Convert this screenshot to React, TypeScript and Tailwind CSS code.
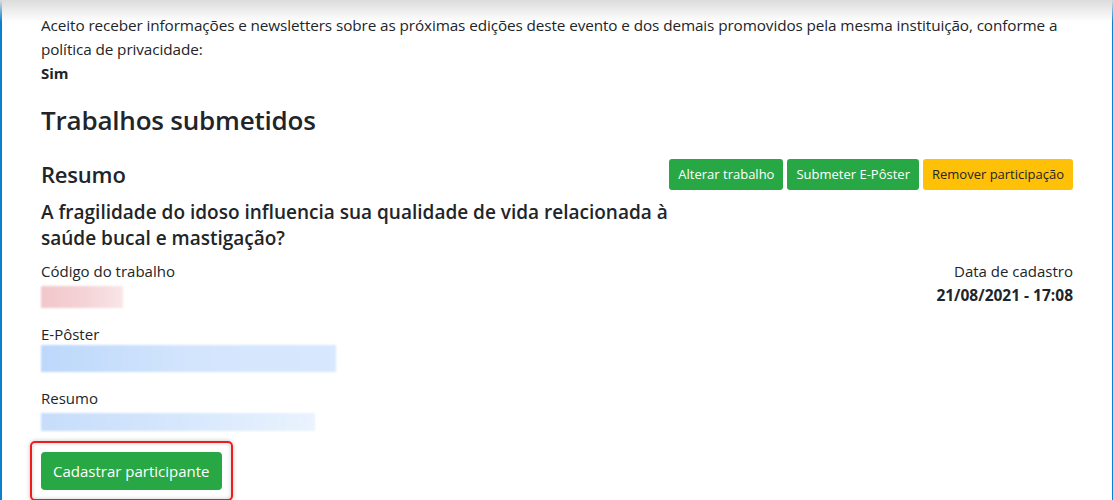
export default function App() {
  const font = { fontFamily: '"Open Sans", "Noto Sans", sans-serif' };
  return (
    <div className="relative h-[500px] w-[1113px] overflow-hidden bg-white text-[#212529]" style={font}>
      {/* moldura azul */}
      <div className="absolute left-0 top-0 h-full w-[2px] bg-[#0a7fd1]" />
      <div className="absolute right-0 top-0 h-full w-[1px] bg-[#0a7fd1]" />
      <div className="pointer-events-none absolute left-0 top-0 h-[22px] w-full bg-gradient-to-b from-[#dcdcdc] to-white/0" />

      <div className="pl-[41px] pr-[40px] pt-[13px]">
        <p className="text-[15.3px] leading-[24px] tracking-[-0.1px]">
          Aceito receber informações e newsletters sobre as próximas edições deste evento e dos demais promovidos pela mesma instituição, conforme a política de privacidade:
        </p>
        <p className="text-[15px] font-bold leading-[24px]">Sim</p>

        <h3 className="mt-[20px] text-[26px] font-semibold leading-[30px] tracking-[-0.2px]">Trabalhos submetidos</h3>

        <div className="mt-[24px] flex items-start justify-between">
          <h4 className="pt-[1px] text-[22px] font-semibold leading-[28px] tracking-[-0.2px]">Resumo</h4>
          <div className="flex gap-[4px]">
            <button className="h-[31px] rounded-[3px] bg-[#28a745] px-[9px] text-[13px] text-white">Alterar trabalho</button>
            <button className="h-[31px] rounded-[3px] bg-[#28a745] px-[9px] text-[13px] text-white">Submeter E-Pôster</button>
            <button className="h-[31px] rounded-[3px] bg-[#ffc107] px-[9px] text-[13px] text-[#212529]">Remover participação</button>
          </div>
        </div>

        <h5 className="mt-[9px] w-[640px] text-[19px] font-semibold leading-[26px]">
          A fragilidade do idoso influencia sua qualidade de vida relacionada à saúde bucal e mastigação?
        </h5>

        <div className="mt-[8px] flex justify-between">
          <div>
            <p className="text-[15px] leading-[24px]">Código do trabalho</p>
            <div className="mt-[3px] h-[22px] w-[82px] bg-gradient-to-r from-[#f2c7cb] via-[#f4d2d5] to-[#f9e6e8] blur-[1px]" />
            <p className="mt-[14px] text-[15px] leading-[24px]">E-Pôster</p>
            <div className="-mt-[1px] h-[27px] w-[295px] bg-gradient-to-r from-[#bcd8fb] via-[#d3e5fd] to-[#d8e8fe] blur-[1px]" />
            <p className="mt-[14px] text-[15px] leading-[24px]">Resumo</p>
            <div className="mt-[3px] h-[18px] w-[274px] bg-gradient-to-r from-[#c6ddfb] via-[#d6e7fd] to-[#eaf3fe] blur-[1px]" />
          </div>
          <div className="text-right">
            <p className="text-[15px] leading-[24px]">Data de cadastro</p>
            <p className="text-[15.5px] font-bold leading-[24px]">21/08/2021 - 17:08</p>
          </div>
        </div>

        <div className="-ml-[11px] mt-[10px] inline-block rounded-[5px] border-2 border-[#ee1c1c] p-[9px] shadow-[0_0_4px_rgba(0,0,0,0.25),inset_0_0_4px_rgba(0,0,0,0.2)]">
          <button className="h-[38px] rounded-[4px] bg-[#28a745] px-[12px] text-[15px] text-white">Cadastrar participante</button>
        </div>
      </div>
    </div>
  );
}
